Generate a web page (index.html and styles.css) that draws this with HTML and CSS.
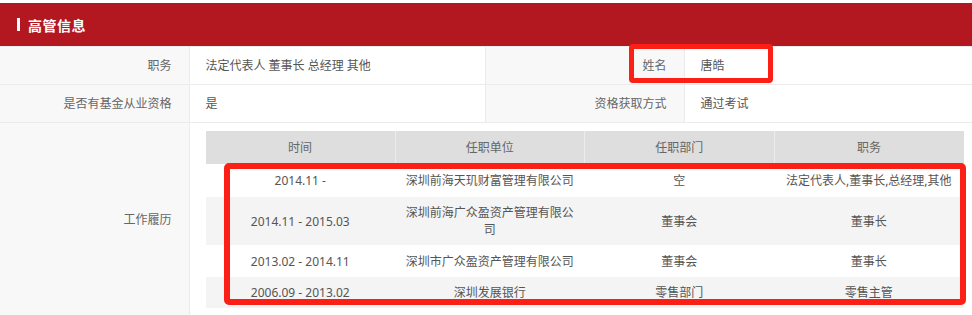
FILE: index.html
```html
<!DOCTYPE html>
<html lang="zh-CN">
<head>
<meta charset="utf-8">
<title>高管信息</title>
<link rel="stylesheet" href="styles.css">
</head>
<body>
<div class="sheet">
  <section class="panel">
    <h2 class="panel-title"><span class="title-mark"></span>高管信息</h2>
    <table class="info">
      <colgroup>
        <col class="c-label1">
        <col class="c-value1">
        <col class="c-label2">
        <col class="c-value2">
      </colgroup>
      <tr>
        <th class="label">职务</th>
        <td class="value">法定代表人 董事长 总经理 其他</td>
        <th class="label">姓名</th>
        <td class="value">唐皓</td>
      </tr>
      <tr>
        <th class="label">是否有基金从业资格</th>
        <td class="value">是</td>
        <th class="label">资格获取方式</th>
        <td class="value">通过考试</td>
      </tr>
      <tr>
        <th class="label">工作履历</th>
        <td class="value history-cell" colspan="3">
          <table class="history">
            <thead>
              <tr>
                <th>时间</th>
                <th>任职单位</th>
                <th>任职部门</th>
                <th>职务</th>
              </tr>
            </thead>
            <tbody>
              <tr class="r1">
                <td>2014.11 -</td>
                <td>深圳前海天玑财富管理有限公司</td>
                <td>空</td>
                <td>法定代表人,董事长,总经理,其他</td>
              </tr>
              <tr class="r2">
                <td>2014.11 - 2015.03</td>
                <td>深圳前海广众盈资产管理有限公司</td>
                <td>董事会</td>
                <td>董事长</td>
              </tr>
              <tr class="r3">
                <td>2013.02 - 2014.11</td>
                <td>深圳市广众盈资产管理有限公司</td>
                <td>董事会</td>
                <td>董事长</td>
              </tr>
              <tr class="r4">
                <td>2006.09 - 2013.02</td>
                <td>深圳发展银行</td>
                <td>零售部门</td>
                <td>零售主管</td>
              </tr>
            </tbody>
          </table>
        </td>
      </tr>
    </table>
  </section>
  <div class="callout callout-name"></div>
  <div class="callout callout-history"></div>
</div>
</body>
</html>
```

FILE: styles.css
```css
html, body {
  margin: 0;
  padding: 0;
  background: #ffffff;
}

body {
  font-family: "Noto Sans", "Noto Sans CJK SC", sans-serif;
  font-size: 12px;
  color: #555555;
  overflow: hidden;
}

.sheet {
  position: relative;
  width: 972px;
  padding-top: 3px;
}

/* red section heading */
.panel-title {
  margin: 0;
  height: 43px;
  background: #b3171f;
  color: #ffffff;
  font-size: 14px;
  font-weight: bold;
  letter-spacing: 0.5px;
  display: flex;
  align-items: center;
  padding-left: 17px;
  box-sizing: border-box;
}

.title-mark {
  display: inline-block;
  width: 3px;
  height: 13px;
  background: #ffffff;
  margin-right: 8px;
}

/* key/value grid */
.info {
  width: 972px;
  border-collapse: collapse;
  table-layout: fixed;
}

.c-label1 { width: 189px; }
.c-value1 { width: 296px; }
.c-label2 { width: 199px; }
.c-value2 { width: 288px; }

.info > tbody > tr > th,
.info > tbody > tr > td {
  border: 1px solid #ebebeb;
  height: 38px;
  padding: 0 16px;
  line-height: 17px;
  box-sizing: border-box;
}

.info th.label {
  background: #f8f8f8;
  font-weight: normal;
  text-align: right;
  color: #666666;
  padding-right: 17px;
  border-left: none;
}

.info td.value {
  text-align: left;
  color: #555555;
}

.info td.history-cell {
  padding: 8px 0 8px 16px;
  vertical-align: top;
}

/* employment history table */
.history {
  width: 758px;
  border-collapse: collapse;
  table-layout: fixed;
}

.history th {
  background: #dedede;
  font-weight: normal;
  color: #666666;
  height: 33px;
  padding: 0 8px;
  border-right: 1px solid #ececec;
  text-align: center;
}

.history th:last-child {
  border-right: none;
}

.history td {
  text-align: center;
  padding: 7px 8px;
  line-height: 17px;
  color: #555555;
}

.history tr.r1 td { height: 19px; }
.history tr.r2 td { height: 34px; }
.history tr.r3 td { height: 18px; }
.history tr.r4 td { height: 17px; }

.history tbody tr:nth-child(even) td {
  background: #f4f4f4;
}

/* highlight frames laid over the sheet */
.callout {
  position: absolute;
  border-style: solid;
  border-color: #fb1f16;
  box-sizing: border-box;
  pointer-events: none;
}

.callout-name {
  left: 629px;
  top: 44px;
  width: 144px;
  height: 39px;
  border-width: 5px;
  border-radius: 4px;
}

.callout-history {
  left: 224px;
  top: 163px;
  width: 742px;
  height: 142px;
  border-width: 6px;
  border-radius: 5px;
}
```
